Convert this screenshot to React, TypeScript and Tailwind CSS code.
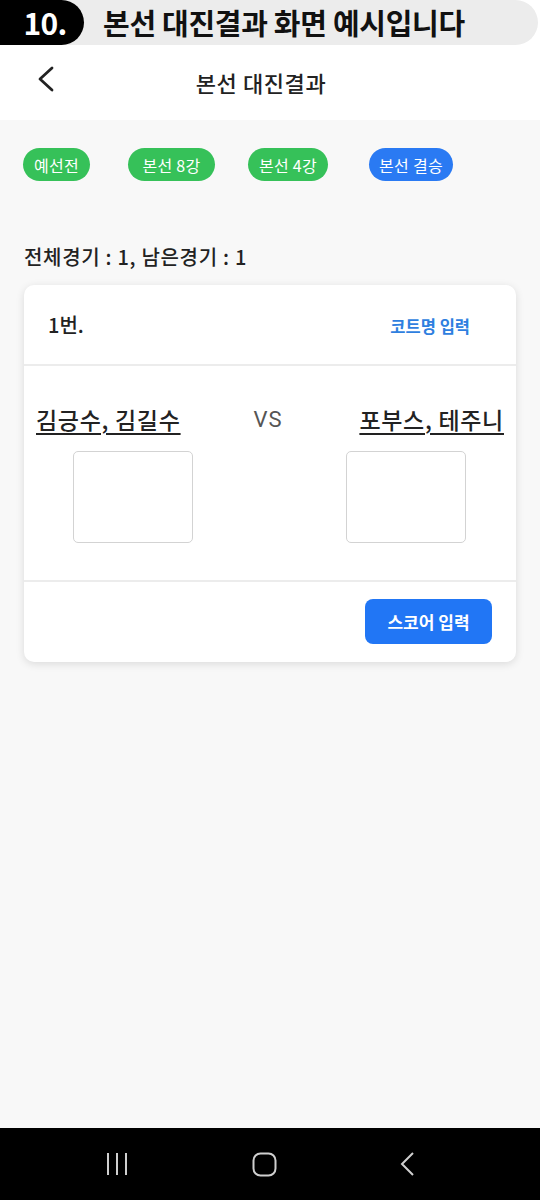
import React from "react";

const font = { fontFamily: '"Noto Sans CJK KR", "Noto Sans", sans-serif' };

function Chip({ label, active, className }: { label: string; active?: boolean; className?: string }) {
  return (
    <span
      className={`inline-flex h-[33px] items-center justify-center rounded-full text-[16px] leading-none tracking-[0.3px] text-white ${
        active ? "bg-[#2a7af3]" : "bg-[#36c159]"
      } ${className ?? ""}`}
    >
      {label}
    </span>
  );
}

export default function App() {
  return (
    <div style={font} className="flex h-[1200px] w-[540px] flex-col overflow-hidden bg-[#f8f8f8]">
      {/* guide banner */}
      <div className="flex h-[45px] items-center bg-white">
        <div className="flex h-[45px] w-[538px] items-center rounded-r-full bg-[#ececec]">
          <div className="flex h-[45px] w-[84px] items-center justify-center rounded-r-full bg-black pl-[6px] text-[30px] font-bold tracking-tight text-white">
            10.
          </div>
          <div className="ml-[19px] text-[29px] font-bold tracking-[-0.3px] text-[#111]">
            본선 대진결과 화면 예시입니다
          </div>
        </div>
      </div>

      {/* header */}
      <div className="relative flex h-[75px] items-center justify-center bg-white pr-[18px]">
        <svg className="absolute left-[35px] top-[20px]" width="24" height="28" viewBox="0 0 24 28" fill="none">
          <polyline points="17,3 5,14 17,25" stroke="#222" strokeWidth="2.8" strokeLinecap="round" strokeLinejoin="round" />
        </svg>
        <h1 className="text-[22px] font-medium tracking-[0.6px] text-[#222]">본선 대진결과</h1>
      </div>

      {/* rounds */}
      <div className="mt-[28px] flex items-center pl-[23px]">
        <Chip label="예선전" className="w-[67px]" />
        <Chip label="본선 8강" className="ml-[38px] w-[87px]" />
        <Chip label="본선 4강" className="ml-[33px] w-[80px]" />
        <Chip label="본선 결승" active className="ml-[41px] w-[84px]" />
      </div>

      <p className="mt-[64px] pl-[24px] text-[20px] font-medium leading-[24px] tracking-[0.7px] text-[#222]">
        전체경기 : 1, 남은경기 : 1
      </p>

      {/* match card */}
      <div className="mx-[24px] mt-[16px] rounded-[10px] bg-white shadow-[0_2px_8px_rgba(0,0,0,0.12)]">
        <div className="flex h-[81px] items-center justify-between border-b-2 border-[#ececec] pl-[24px] pr-[46px]">
          <span className="text-[20px] font-medium text-[#222]">1번.</span>
          <span className="mt-[3px] text-[16.5px] font-bold text-[#2f7fdf]">코트명 입력</span>
        </div>

        <div className="border-b-2 border-[#ececec] pb-[37px] pt-[38px]">
          <div className="flex h-[30px] items-center justify-between px-[12px]">
            <span className="text-[23px] font-medium tracking-[0.7px] text-[#222] underline decoration-[1.5px] underline-offset-[4px]">
              김긍수, 김길수
            </span>
            <span className="pr-[4px] text-[22px] tracking-[1px] text-[#555]" style={{ fontFamily: '"Roboto", sans-serif' }}>
              VS
            </span>
            <span className="text-[23px] font-medium tracking-[0.7px] text-[#222] underline decoration-[1.5px] underline-offset-[4px]">
              포부스, 테주니
            </span>
          </div>
          <div className="mt-[17px] flex justify-between pl-[49px] pr-[50px]">
            <div className="h-[92px] w-[120px] rounded-[5px] border border-[#d3d3d3]" />
            <div className="h-[92px] w-[120px] rounded-[5px] border border-[#d3d3d3]" />
          </div>
        </div>

        <div className="flex justify-end pb-[18px] pr-[24px] pt-[17px]">
          <button className="h-[45px] w-[127px] rounded-[8px] bg-[#2176f5] text-[17px] font-bold text-white">
            스코어 입력
          </button>
        </div>
      </div>

      <div className="flex-1" />

      {/* system nav */}
      <div className="flex h-[72px] items-center bg-black">
        <div className="flex w-full items-center justify-between pl-[106px] pr-[124px]">
          <svg width="22" height="24" viewBox="0 0 22 24">
            <g stroke="#cfcfcf" strokeWidth="2">
              <line x1="2" y1="1" x2="2" y2="23" />
              <line x1="11" y1="1" x2="11" y2="23" />
              <line x1="20" y1="1" x2="20" y2="23" />
            </g>
          </svg>
          <svg width="25" height="25" viewBox="0 0 25 25">
            <rect x="1.5" y="1.5" width="22" height="22" rx="7" fill="none" stroke="#cfcfcf" strokeWidth="2" />
          </svg>
          <svg width="16" height="26" viewBox="0 0 16 26">
            <polyline points="13,2 2,13 13,24" fill="none" stroke="#cfcfcf" strokeWidth="2" />
          </svg>
        </div>
      </div>
    </div>
  );
}
